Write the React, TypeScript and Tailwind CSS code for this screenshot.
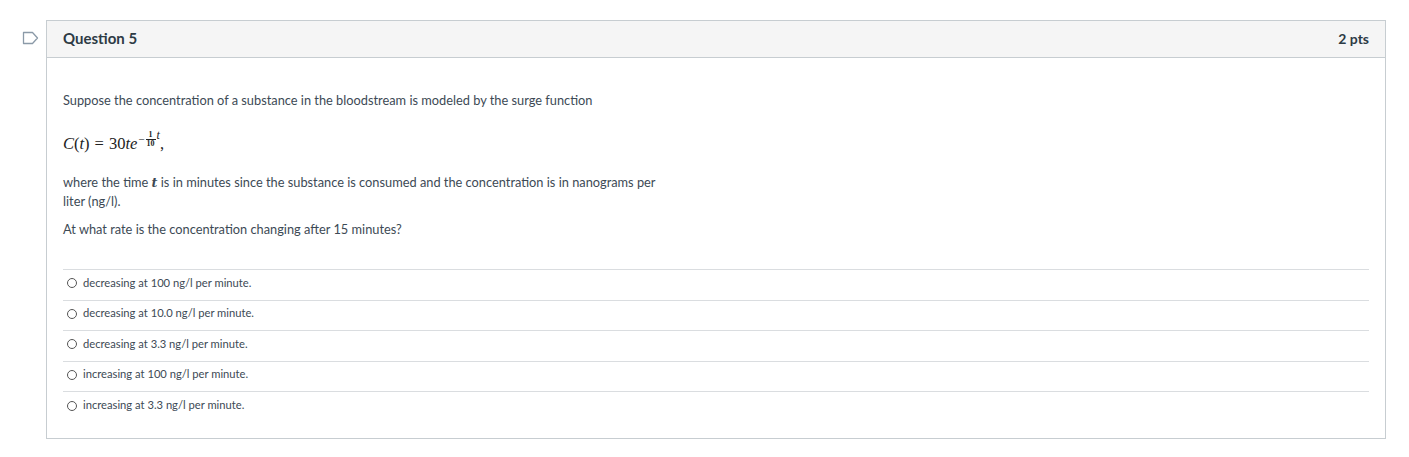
const answers = [
  "decreasing at 100 ng/l per minute.",
  "decreasing at 10.0 ng/l per minute.",
  "decreasing at 3.3 ng/l per minute.",
  "increasing at 100 ng/l per minute.",
  "increasing at 3.3 ng/l per minute.",
];

function Flag() {
  return (
    <svg width="17" height="14" viewBox="0 0 17 14" className="mt-[11px]">
      <path d="M1.5 1.5 H10.5 L15.5 7 L10.5 12.5 H1.5 Z" fill="none" stroke="#8b9aa8" strokeWidth="1.3" strokeLinejoin="round" />
    </svg>
  );
}

function Formula() {
  return (
    <div className="flex items-end text-[16.5px] leading-[19px] text-[#222]" style={{ fontFamily: '"Liberation Serif", "DejaVu Serif", serif' }}>
      <span className="italic">C</span>
      <span>(</span>
      <span className="italic">t</span>
      <span>)</span>
      <span className="mx-[5px]">=</span>
      <span>30</span>
      <span className="italic">te</span>
      <span className="flex items-center self-start -mt-[4px] ml-[1px]">
        <span className="text-[11px] mr-[1px]">−</span>
        <span className="flex flex-col items-center leading-none text-[8px] font-bold">
          <span>1</span>
          <span className="border-t border-[#222] px-[1px]">10</span>
        </span>
        <span className="italic ml-[1px] -mt-[9px] text-[12px]">t</span>
      </span>
      <span>,</span>
    </div>
  );
}

export default function App() {
  return (
    <div className="w-[1409px] h-[457px] bg-white pt-[20px] flex" style={{ fontFamily: 'Lato, "Liberation Sans", sans-serif' }}>
      <div className="w-[46px] flex justify-end pr-[7px]">
        <Flag />
      </div>
      <div className="w-[1340px] h-[419px] border border-[#c7cdd1] flex flex-col">
        <div className="h-[37px] bg-[#f5f5f5] border-b border-[#c7cdd1] flex items-center justify-between pl-[16px] pr-[16px] pb-[1px] text-[#2d3b45] font-bold">
          <span className="text-[15px]">Question 5</span>
          <span className="text-[14px]">2 pts</span>
        </div>
        <div className="px-[16px] pt-[33px] text-[12.8px] text-[#3d4a55]">
          <p className="leading-[18px]">Suppose the concentration of a substance in the bloodstream is modeled by the surge function</p>
          <div className="mt-[25px] h-[20px]">
            <Formula />
          </div>
          <p className="mt-[19px] leading-[18px]">
            where the time <span className="italic font-bold" style={{ fontFamily: '"DejaVu Serif", serif' }}>t</span> is in minutes since the substance is consumed and the concentration is in nanograms per
            <br />
            liter (ng/l).
          </p>
          <p className="mt-[10px] leading-[18px]">At what rate is the concentration changing after 15 minutes?</p>
          <div className="mt-[31px] border-t border-[#dadde0]">
            {answers.map((a, i) => (
              <div key={a} className={`h-[30.5px] flex items-center pl-[4px] pb-[3px] text-[11.2px] text-[#3d4a55] ${i < answers.length - 1 ? "border-b border-[#dadde0]" : ""}`}>
                <span className="w-[10px] h-[10px] rounded-full border border-[#555] mr-[6px]" />
                <span>{a}</span>
              </div>
            ))}
          </div>
        </div>
      </div>
    </div>
  );
}
